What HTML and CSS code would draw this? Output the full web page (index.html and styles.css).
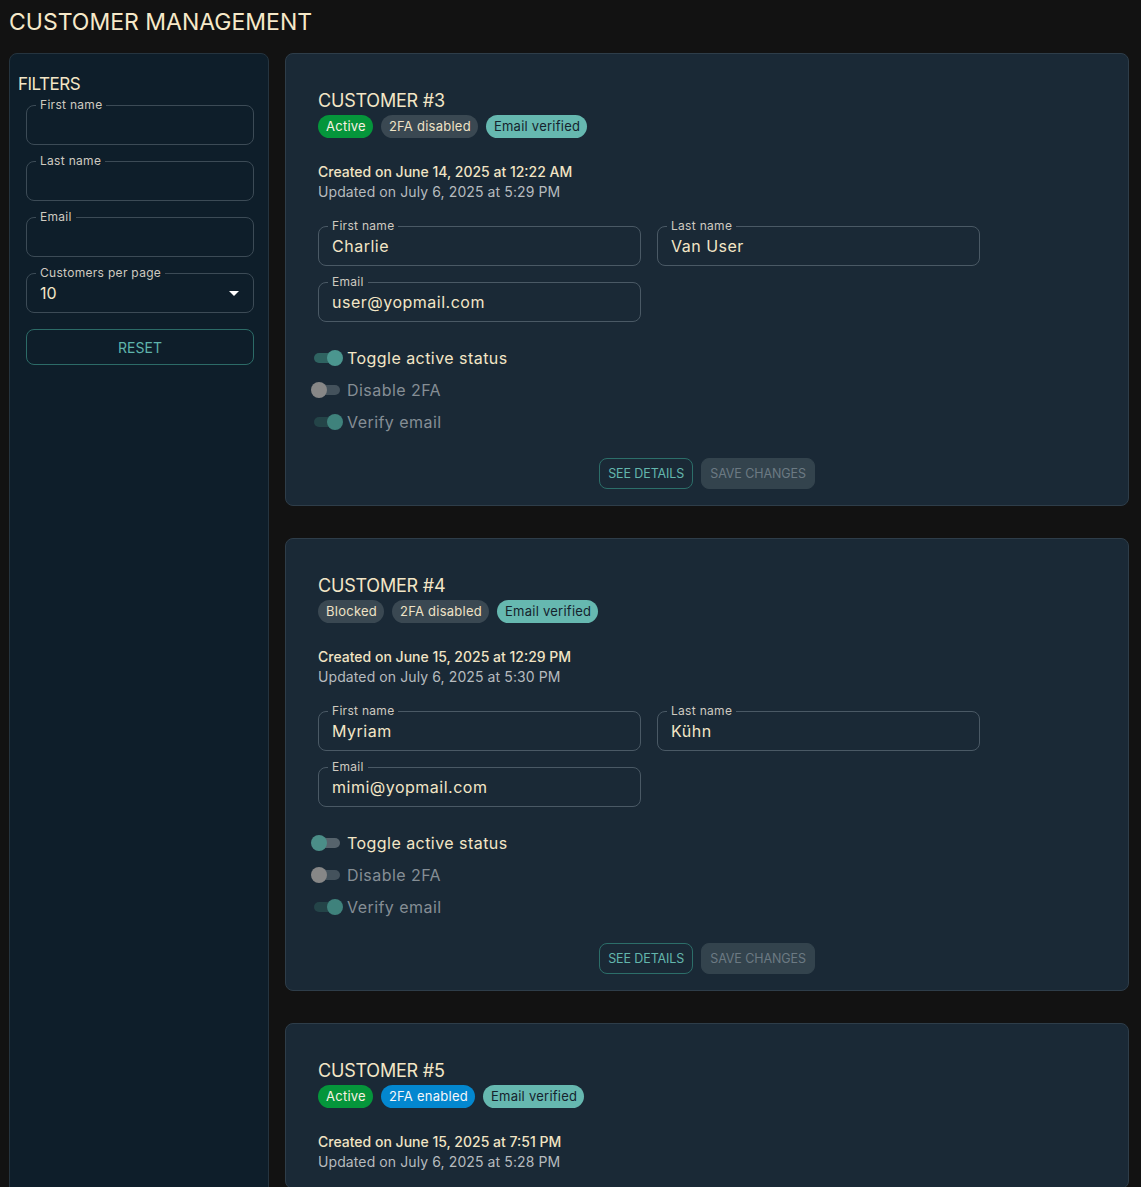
FILE: index.html
```html
<!DOCTYPE html>
<html lang="en">
<head>
<meta charset="utf-8">
<title>Customer management</title>
<link rel="stylesheet" href="styles.css">
</head>
<body>
<h1 class="page-title">CUSTOMER MANAGEMENT</h1>
<div class="layout">
  <aside class="sidebar">
    <h2 class="filters-title">FILTERS</h2>
    <form class="filters">
      <fieldset class="field field--side"><legend>First name</legend><input class="field-input" type="text"></fieldset>
      <fieldset class="field field--side"><legend>Last name</legend><input class="field-input" type="text"></fieldset>
      <fieldset class="field field--side"><legend>Email</legend><input class="field-input" type="text"></fieldset>
      <fieldset class="field field--side"><legend>Customers per page</legend>
        <div class="select-value"><span>10</span><svg class="caret" viewBox="0 0 24 24" width="24" height="24"><path d="M7 10l5 5 5-5z" fill="#ffffff"/></svg></div>
      </fieldset>
      <button type="button" class="btn-reset">RESET</button>
    </form>
  </aside>

  <main class="cards">
    <section class="card">
      <h3 class="card-title">CUSTOMER #3</h3>
      <div class="badges">
        <span class="badge badge--green">Active</span>
        <span class="badge badge--gray">2FA disabled</span>
        <span class="badge badge--teal">Email verified</span>
      </div>
      <div class="dates">
        <p class="created">Created on June 14, 2025 at 12:22 AM</p>
        <p class="updated">Updated on July 6, 2025 at 5:29 PM</p>
      </div>
      <div class="fields">
        <fieldset class="field"><legend>First name</legend><input class="field-input" type="text" value="Charlie"></fieldset>
        <fieldset class="field"><legend>Last name</legend><input class="field-input" type="text" value="Van User"></fieldset>
        <fieldset class="field"><legend>Email</legend><input class="field-input" type="text" value="user@yopmail.com"></fieldset>
      </div>
      <div class="toggles">
        <div class="toggle"><span class="switch switch--on"><span class="track"></span><span class="thumb"></span></span><span class="toggle-label">Toggle active status</span></div>
        <div class="toggle toggle--disabled"><span class="switch switch--off-disabled"><span class="track"></span><span class="thumb"></span></span><span class="toggle-label">Disable 2FA</span></div>
        <div class="toggle toggle--disabled"><span class="switch switch--on-disabled"><span class="track"></span><span class="thumb"></span></span><span class="toggle-label">Verify email</span></div>
      </div>
      <div class="actions">
        <button type="button" class="btn btn-outline">SEE DETAILS</button>
        <button type="button" class="btn btn-disabled">SAVE CHANGES</button>
      </div>
    </section>

    <section class="card">
      <h3 class="card-title">CUSTOMER #4</h3>
      <div class="badges">
        <span class="badge badge--gray">Blocked</span>
        <span class="badge badge--gray">2FA disabled</span>
        <span class="badge badge--teal">Email verified</span>
      </div>
      <div class="dates">
        <p class="created">Created on June 15, 2025 at 12:29 PM</p>
        <p class="updated">Updated on July 6, 2025 at 5:30 PM</p>
      </div>
      <div class="fields">
        <fieldset class="field"><legend>First name</legend><input class="field-input" type="text" value="Myriam"></fieldset>
        <fieldset class="field"><legend>Last name</legend><input class="field-input" type="text" value="Kühn"></fieldset>
        <fieldset class="field"><legend>Email</legend><input class="field-input" type="text" value="mimi@yopmail.com"></fieldset>
      </div>
      <div class="toggles">
        <div class="toggle"><span class="switch switch--off-focus"><span class="track"></span><span class="thumb"></span></span><span class="toggle-label">Toggle active status</span></div>
        <div class="toggle toggle--disabled"><span class="switch switch--off-disabled"><span class="track"></span><span class="thumb"></span></span><span class="toggle-label">Disable 2FA</span></div>
        <div class="toggle toggle--disabled"><span class="switch switch--on-disabled"><span class="track"></span><span class="thumb"></span></span><span class="toggle-label">Verify email</span></div>
      </div>
      <div class="actions">
        <button type="button" class="btn btn-outline">SEE DETAILS</button>
        <button type="button" class="btn btn-disabled">SAVE CHANGES</button>
      </div>
    </section>

    <section class="card">
      <h3 class="card-title">CUSTOMER #5</h3>
      <div class="badges">
        <span class="badge badge--green">Active</span>
        <span class="badge badge--blue">2FA enabled</span>
        <span class="badge badge--teal">Email verified</span>
      </div>
      <div class="dates">
        <p class="created">Created on June 15, 2025 at 7:51 PM</p>
        <p class="updated">Updated on July 6, 2025 at 5:28 PM</p>
      </div>
    </section>
  </main>
</div>
</body>
</html>
```

FILE: styles.css
```css
* { box-sizing: border-box; }

html, body {
  margin: 0;
  padding: 0;
  background: #121212;
}

body {
  font-family: "Inter", "Noto Sans", sans-serif;
  color: #f3e6c6;
  overflow: hidden;
  height: 1187px;
}

.page-title {
  margin: 0;
  padding: 6px 9px 0;
  height: 53px;
  font-size: 23px;
  line-height: 32px;
  font-weight: 400;
  color: #f6e9c9;
  letter-spacing: 0;
}

.layout {
  display: flex;
  gap: 16px;
  padding: 0 12px 0 9px;
  align-items: flex-start;
}

.sidebar {
  flex: 0 0 260px;
  min-height: 1200px;
  background: #0e1e2a;
  border: 1px solid #25343f;
  border-radius: 8px;
  padding: 19px 14px 16px 8px;
}

.filters-title {
  margin: 0;
  font-size: 17px;
  line-height: 22px;
  font-weight: 400;
  color: #f3e6c6;
  letter-spacing: -0.5px;
}

.filters {
  margin: 4px 0 0 8px;
  display: flex;
  flex-direction: column;
  gap: 10px;
}

.field {
  margin: 0;
  min-width: 0;
  border: 1px solid #4a5965;
  border-radius: 8px;
  padding: 0 9px;
}

.field--side { border-color: #3c4b56; }

.field legend {
  font-size: 12px;
  line-height: 12px;
  padding: 0 4px;
  color: #cfcac0;
  letter-spacing: 0.3px;
}

.field-input {
  display: block;
  width: 100%;
  height: 33px;
  padding: 0 4px 5px;
  border: none;
  background: transparent;
  font-family: inherit;
  font-size: 16px;
  letter-spacing: 0.5px;
  color: #f3e6c6;
  outline: none;
}

.select-value {
  height: 33px;
  padding: 0 0 5px 4px;
  display: flex;
  align-items: center;
  justify-content: space-between;
  font-size: 16px;
  color: #f3e6c6;
}

.caret { margin-right: -2px; }

.btn-reset {
  margin-top: 6px;
  height: 36px;
  width: 100%;
  background: transparent;
  border: 1px solid #2c6b67;
  border-radius: 8px;
  color: #5fb4ab;
  font-family: inherit;
  font-size: 14px;
}

.cards {
  flex: 1;
  display: flex;
  flex-direction: column;
  gap: 32px;
}

.card {
  background: #1a2936;
  border: 1px solid #2e3d49;
  border-radius: 8px;
  padding: 33px 32px 16px;
}

.card-title {
  margin: 0;
  font-size: 18px;
  line-height: 27px;
  font-weight: 400;
  color: #f3e6c6;
  letter-spacing: -0.2px;
}

.badges {
  margin-top: 1px;
  display: flex;
  gap: 8px;
}

.badge {
  height: 23px;
  line-height: 23px;
  padding: 0 7px 0 8px;
  border-radius: 12px;
  font-size: 13px;
  letter-spacing: 0.25px;
}

.badge--green { background: #05963b; color: #f7f1e2; }
.badge--gray  { background: #3a4852; color: #eee2c6; }
.badge--teal  { background: #66b8b0; color: #15232d; }
.badge--blue  { background: #0387cf; color: #f5f7fa; }

.dates { margin-top: 24px; }

.dates p {
  margin: 0;
  font-size: 14px;
  line-height: 20px;
}

.created { color: #f1e4c4; font-weight: 500; }
.updated { color: #b6bbbf; letter-spacing: 0.1px; }

.fields {
  margin-top: 18px;
  display: grid;
  grid-template-columns: 323px 323px;
  column-gap: 16px;
  row-gap: 10px;
}

.toggles {
  margin-top: 20px;
  display: flex;
  flex-direction: column;
}

.toggle {
  height: 32px;
  display: flex;
  align-items: center;
  margin-left: -11px;
}

.toggle-label {
  font-size: 16px;
  letter-spacing: 0.45px;
  color: #f3e6c6;
}

.toggle--disabled .toggle-label { color: #858e95; }

.switch {
  position: relative;
  width: 40px;
  height: 24px;
  flex: 0 0 40px;
}

.track {
  position: absolute;
  left: 7px;
  top: 7px;
  width: 26px;
  height: 10px;
  border-radius: 5px;
}

.thumb {
  position: absolute;
  top: 4px;
  left: 4px;
  width: 16px;
  height: 16px;
  border-radius: 50%;
}

.switch--on .track { background: #2f6361; }
.switch--on .thumb { left: 20px; background: #4b968f; }

.switch--on-disabled .track { background: #244448; }
.switch--on-disabled .thumb { left: 20px; background: #3f827c; }

.switch--off-disabled .track { background: #44525c; }
.switch--off-disabled .thumb { background: #878787; }

.switch--off-focus .track { background: #56636c; }
.switch--off-focus .thumb { background: #4b8e88; }

.actions {
  margin-top: 20px;
  display: flex;
  justify-content: center;
  gap: 8px;
}

.btn {
  height: 31px;
  padding: 0 8px;
  border-radius: 8px;
  font-family: inherit;
  font-size: 12.5px;
  letter-spacing: -0.1px;
}

.btn-outline {
  background: transparent;
  border: 1px solid #2c6e69;
  color: #63b6ad;
}

.btn-disabled {
  background: #33434d;
  border: 1px solid #33434d;
  color: #6c7a83;
}
```
